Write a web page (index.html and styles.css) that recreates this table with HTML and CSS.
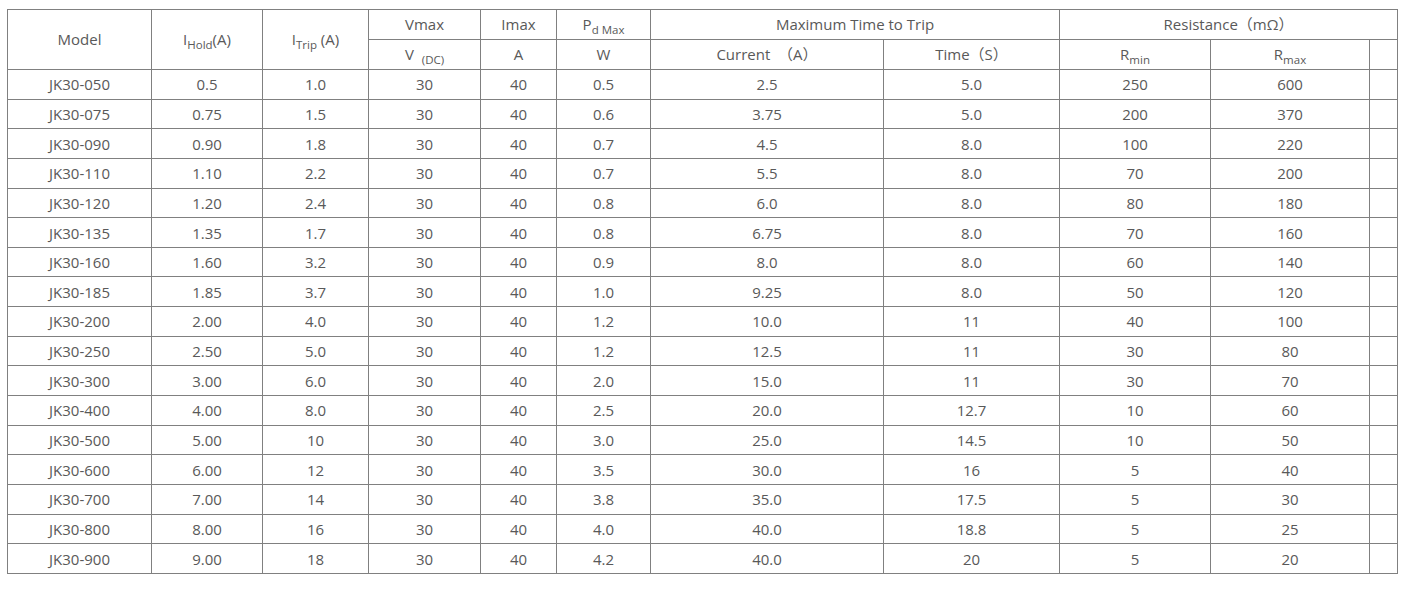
FILE: index.html
```html
<!DOCTYPE html>
<html>
<head>
<meta charset="utf-8">
<link rel="stylesheet" href="styles.css">
</head>
<body>
<div class="wrap">
<table class="spec">
<colgroup>
<col class="c1"><col class="c2"><col class="c3"><col class="c4"><col class="c5"><col class="c6"><col class="c7"><col class="c8"><col class="c9"><col class="c10"><col class="c11">
</colgroup>
<thead>
<tr class="hrow">
<td rowspan="2">Model</td>
<td rowspan="2">I<sub>Hold</sub>(A)</td>
<td rowspan="2">I<sub>Trip</sub> (A)</td>
<td>Vmax</td>
<td>Imax</td>
<td>P<sub>d Max</sub></td>
<td colspan="2">Maximum Time to Trip</td>
<td colspan="3">Resistance（mΩ）</td>
</tr>
<tr class="hrow">
<td>V <sub class="dc">(DC)</sub></td>
<td>A</td>
<td>W</td>
<td>Current &nbsp;（A）</td>
<td>Time（S）</td>
<td>R<sub>min</sub></td>
<td>R<sub>max</sub></td>
<td></td>
</tr>
</thead>
<tbody>
<tr><td>JK30-050</td><td>0.5</td><td>1.0</td><td>30</td><td>40</td><td>0.5</td><td>2.5</td><td>5.0</td><td>250</td><td>600</td><td></td></tr>
<tr><td>JK30-075</td><td>0.75</td><td>1.5</td><td>30</td><td>40</td><td>0.6</td><td>3.75</td><td>5.0</td><td>200</td><td>370</td><td></td></tr>
<tr><td>JK30-090</td><td>0.90</td><td>1.8</td><td>30</td><td>40</td><td>0.7</td><td>4.5</td><td>8.0</td><td>100</td><td>220</td><td></td></tr>
<tr><td>JK30-110</td><td>1.10</td><td>2.2</td><td>30</td><td>40</td><td>0.7</td><td>5.5</td><td>8.0</td><td>70</td><td>200</td><td></td></tr>
<tr><td>JK30-120</td><td>1.20</td><td>2.4</td><td>30</td><td>40</td><td>0.8</td><td>6.0</td><td>8.0</td><td>80</td><td>180</td><td></td></tr>
<tr><td>JK30-135</td><td>1.35</td><td>1.7</td><td>30</td><td>40</td><td>0.8</td><td>6.75</td><td>8.0</td><td>70</td><td>160</td><td></td></tr>
<tr><td>JK30-160</td><td>1.60</td><td>3.2</td><td>30</td><td>40</td><td>0.9</td><td>8.0</td><td>8.0</td><td>60</td><td>140</td><td></td></tr>
<tr><td>JK30-185</td><td>1.85</td><td>3.7</td><td>30</td><td>40</td><td>1.0</td><td>9.25</td><td>8.0</td><td>50</td><td>120</td><td></td></tr>
<tr><td>JK30-200</td><td>2.00</td><td>4.0</td><td>30</td><td>40</td><td>1.2</td><td>10.0</td><td>11</td><td>40</td><td>100</td><td></td></tr>
<tr><td>JK30-250</td><td>2.50</td><td>5.0</td><td>30</td><td>40</td><td>1.2</td><td>12.5</td><td>11</td><td>30</td><td>80</td><td></td></tr>
<tr><td>JK30-300</td><td>3.00</td><td>6.0</td><td>30</td><td>40</td><td>2.0</td><td>15.0</td><td>11</td><td>30</td><td>70</td><td></td></tr>
<tr><td>JK30-400</td><td>4.00</td><td>8.0</td><td>30</td><td>40</td><td>2.5</td><td>20.0</td><td>12.7</td><td>10</td><td>60</td><td></td></tr>
<tr><td>JK30-500</td><td>5.00</td><td>10</td><td>30</td><td>40</td><td>3.0</td><td>25.0</td><td>14.5</td><td>10</td><td>50</td><td></td></tr>
<tr><td>JK30-600</td><td>6.00</td><td>12</td><td>30</td><td>40</td><td>3.5</td><td>30.0</td><td>16</td><td>5</td><td>40</td><td></td></tr>
<tr><td>JK30-700</td><td>7.00</td><td>14</td><td>30</td><td>40</td><td>3.8</td><td>35.0</td><td>17.5</td><td>5</td><td>30</td><td></td></tr>
<tr><td>JK30-800</td><td>8.00</td><td>16</td><td>30</td><td>40</td><td>4.0</td><td>40.0</td><td>18.8</td><td>5</td><td>25</td><td></td></tr>
<tr><td>JK30-900</td><td>9.00</td><td>18</td><td>30</td><td>40</td><td>4.2</td><td>40.0</td><td>20</td><td>5</td><td>20</td><td></td></tr>
</tbody>
</table>
</div>
</body>
</html>
```
FILE: styles.css
```css
html, body {
  margin: 0;
  padding: 0;
  background: #fff;
}
.wrap {
  padding: 9px 0 0 7px;
}
.spec {
  border-collapse: collapse;
  table-layout: fixed;
  width: 1390px;
  font-family: "Open Sans", "Noto Sans CJK SC", sans-serif;
  font-size: 15px;
  color: #595959;
}
.spec td {
  border: 1px solid #808080;
  text-align: center;
  vertical-align: middle;
  padding: 0;
  line-height: 18px;
}
.spec .hrow {
  height: 30px;
}
.spec .hrow td {
  padding-bottom: 2px;
}
.spec tbody tr {
  height: 29.65px;
}
.spec sub {
  font-size: 11.5px;
  vertical-align: -4px;
  line-height: 0;
}
.spec sub.dc {
  margin-left: 4px;
}
.c1 { width: 144px; }
.c2 { width: 111px; }
.c3 { width: 106px; }
.c4 { width: 112px; }
.c5 { width: 76px; }
.c6 { width: 94px; }
.c7 { width: 233px; }
.c8 { width: 176px; }
.c9 { width: 151px; }
.c10 { width: 159px; }
.c11 { width: 28px; }
```
